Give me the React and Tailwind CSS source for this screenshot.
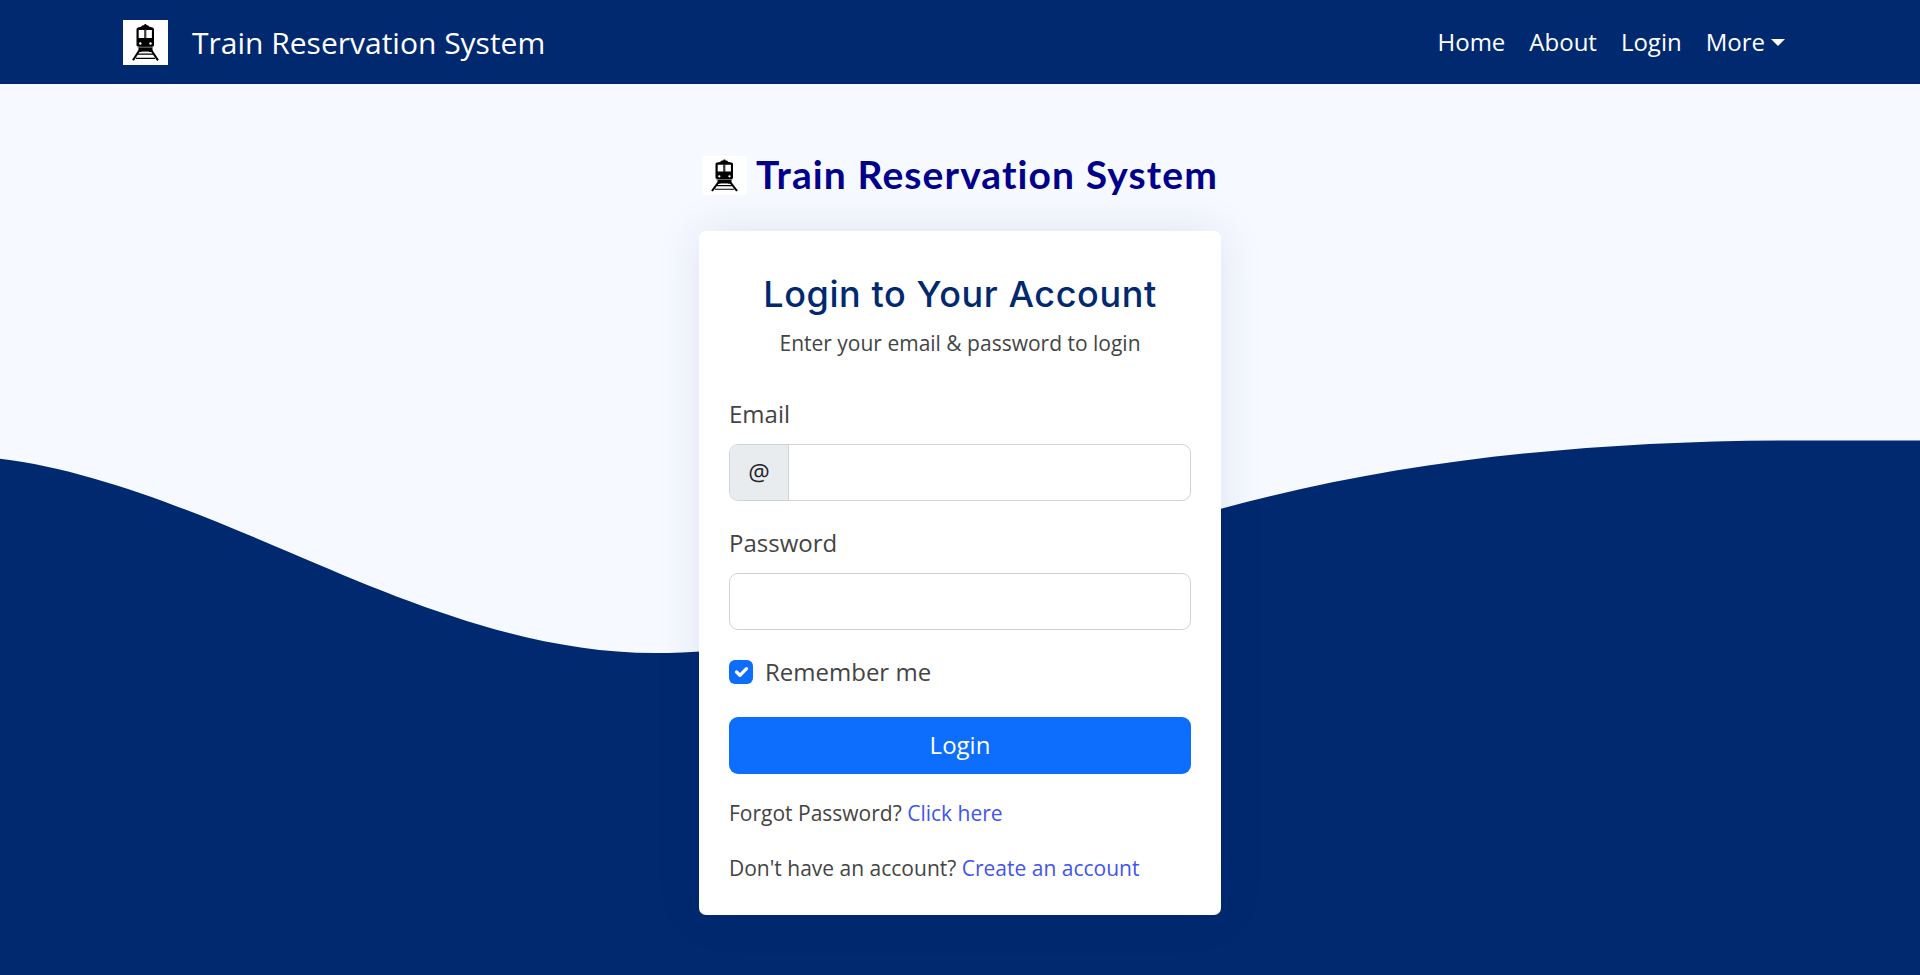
function TrainIcon({ className }) {
  return (
    <svg viewBox="0 0 45 45" preserveAspectRatio="none" className={className}>
      <rect width="45" height="45" fill="#fff" />
      <path d="M13.500 9.300Q13.500 8 15 7.500L18 6.800Q19 5.200 21.500 5V4h1.700V5Q25.500 5.200 26.500 6.800L29.500 7.500Q31 8 31 9.300V25.700L29.500 26.800V32H15.500V26.800L13.500 25.700Z" fill="#000" />
      <path d="M15.700 10h5.600v7.900h-5.600zM23.300 10h5.600v7.900h-5.600z" fill="#fff" />
      <path d="M22.300 9.500V18" stroke="#888" strokeWidth=".6" />
      <circle cx="17.300" cy="23.500" r="1.200" fill="#fff" />
      <circle cx="27.500" cy="23.500" r="1.200" fill="#fff" />
      <path d="M14 27.200H30.500" stroke="#999" strokeWidth=".8" />
      <path d="M18.500 31.700H26" stroke="#aaa" strokeWidth=".8" />
      <path d="M16.300 30.500L10 40.300M28.500 30.500L35 40.300" stroke="#000" strokeWidth="2.100" fill="none" />
      <path d="M15 34.200H30M13 38.300H32" stroke="#000" strokeWidth="1.300" fill="none" />
    </svg>
  );
}

function Wave() {
  return (
    <svg viewBox="0 0 1920 975" preserveAspectRatio="none" className="absolute inset-0 h-full w-full">
      <path d="M0 458.700C95 470 200 514 290 552.500C400 599.500 525 653 655 653C850 653 1040 558 1221 508.800C1400 460 1590 440.400 1800 440.400H1920V975H0Z" fill="#012970" />
    </svg>
  );
}

export default function App() {
  return (
    <div className="relative h-[975px] w-full overflow-hidden bg-[#f6f9ff] font-['Open_Sans',sans-serif] text-[#444444]">
      <Wave />
      <div className="relative flex h-full flex-col">
        <header className="flex h-[84px] shrink-0 items-center justify-between bg-[#012970] pr-[135px] pl-[123px] text-white">
          <a href="#" className="flex items-center gap-6">
            <TrainIcon className="size-[45px]" />
            <span className="text-[30px] leading-[45px]">Train Reservation System</span>
          </a>
          <nav className="flex items-center gap-6 text-[24px] leading-9">
            <a href="#">Home</a>
            <a href="#">About</a>
            <a href="#">Login</a>
            <a href="#" className="flex items-center gap-[6px]">
              More
              <svg viewBox="0 0 14 7" className="h-[7px] w-[14px]"><path d="M0 0H14L7 7Z" fill="#fff" /></svg>
            </a>
          </nav>
        </header>
        <main className="flex flex-col items-center">
          <div className="mt-[66px] flex h-[50px] w-[522px] items-center pl-[3px]">
            <TrainIcon className="h-[39px] w-[45px]" />
            <span className="ml-[9px] pb-[2px] font-['Lato',sans-serif] text-[39px] leading-[48px] font-bold tracking-[1.1px] whitespace-nowrap text-[#00008b] [font-variant-ligatures:none]">Train Reservation System</span>
          </div>
          <section className="mt-[31px] flex h-[684px] w-[522px] flex-col rounded-[7px] bg-white px-[30px] pt-[37px] shadow-[0_0_45px_rgba(1,41,112,0.1)]">
            <h1 className="text-center font-['Inter',sans-serif] text-[36px] leading-[53px] font-medium tracking-[0.6px] whitespace-nowrap text-[#012970]">Login to Your Account</h1>
            <p className="mt-[6px] text-center text-[21px] leading-[32px]">Enter your email &amp; password to login</p>
            <label className="mt-[37px] text-[24px] leading-9">Email</label>
            <div className="mt-3 flex h-[57px] rounded-[9px] border border-[#ced4da] bg-white">
              <span className="flex w-[59px] items-center justify-center rounded-l-[8px] border-r border-[#ced4da] bg-[#e9ecef] pb-[2px] text-[24px] leading-9 text-[#212529]">@</span>
            </div>
            <label className="mt-6 text-[24px] leading-9">Password</label>
            <div className="mt-3 h-[57px] rounded-[9px] border border-[#ced4da] bg-white" />
            <label className="mt-6 flex items-center gap-3 text-[24px] leading-9">
              <span className="flex size-6 items-center justify-center rounded-[6px] bg-[#0d6efd]">
                <svg viewBox="0 0 20 20" className="size-[22px]"><path d="M6 10l3 3l6-6" fill="none" stroke="#fff" strokeWidth="3" strokeLinecap="round" strokeLinejoin="round" /></svg>
              </span>
              Remember me
            </label>
            <button className="mt-[27px] h-[57px] rounded-[9px] bg-[#0d6efd] pb-[2px] text-[24px] leading-9 text-white">Login</button>
            <p className="mt-[23px] text-[21px] leading-[32px]">Forgot Password? <a href="#" className="text-[#4154f1]">Click here</a></p>
            <p className="mt-[23px] text-[21px] leading-[32px]">Don't have an account? <a href="#" className="text-[#4154f1]">Create an account</a></p>
          </section>
        </main>
      </div>
    </div>
  );
}
